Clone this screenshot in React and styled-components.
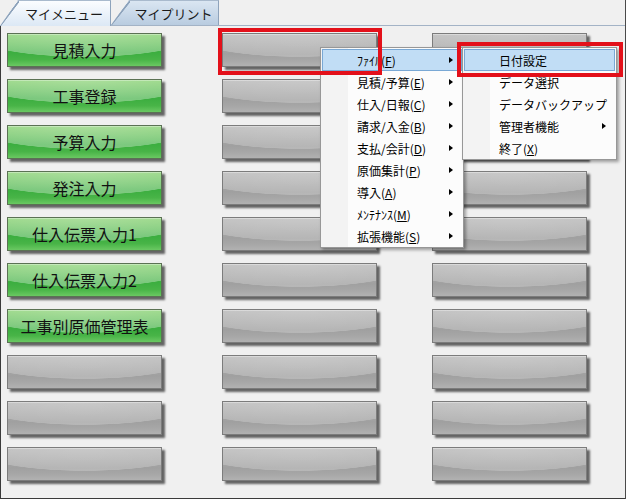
import React from 'react';
import styled, {createGlobalStyle, css} from 'styled-components';

const GlobalStyle = createGlobalStyle`
    body {
        margin: 0;
        background: #fff;
        font-family: "Noto Sans CJK JP", "Noto Sans", sans-serif;
    }
`;

const Frame = styled.div`
    position: relative;
    width: 626px;
    height: 499px;
    box-sizing: border-box;
    background: #f0f0f0;
    border-right: 1px solid #4a4a4a;
    display: flex;
    flex-direction: column;
    overflow: hidden;
`;

const TabStrip = styled.div`
    display: flex;
    height: 26px;
    box-sizing: border-box;
    border-bottom: 1px solid #a3b3c6;
`;

const Tab = styled.div`
    position: relative;
    width: ${p => p.$active ? 111 : 108}px;
    height: ${p => p.$active ? 26 : 25}px;
    box-sizing: border-box;
    padding-left: 18px;
    display: flex;
    align-items: center;
    justify-content: center;
    font-size: 13px;
    color: #1a1a1a;
    border-top: 1px solid #a9bacd;
    border-right: 1px solid #8ea3bb;
    clip-path: polygon(18px 0, 100% 0, 100% 100%, 0 100%);
    background:
        linear-gradient(to bottom right, transparent calc(50% - 1.2px), #8ea3bb calc(50% - 0.6px), #8ea3bb calc(50% + 0.6px), transparent calc(50% + 1.2px)) left top / 19px 100% no-repeat,
        ${p => p.$active
            ? 'linear-gradient(#fbfdff, #dce8f5)'
            : 'linear-gradient(#dae6f2, #b9cce0)'};
    z-index: ${p => p.$active ? 1 : 0};
`;

const Panel = styled.div`
    flex: 1;
    border-left: 1px solid #3a3a3a;
    border-bottom: 1px solid #3a3a3a;
    padding: 7px 0 0 6px;
    display: grid;
    grid-template-columns: 215px 210px 155px;
    grid-auto-rows: 34px;
    row-gap: 12px;
`;

const greenFace = css`
    border: 1px solid #5b7254;
    background:
        radial-gradient(ellipse 74% 72% at 50% 0%, rgba(255, 255, 255, 0.42) 0%, rgba(255, 255, 255, 0.32) 98%, rgba(255, 255, 255, 0) 100%),
        linear-gradient(#70c854 0%, #3cae40 58%, #48b447 80%, #6ac862 100%);
`;

const grayFace = css`
    border: 1px solid #7c7c7c;
    background:
        radial-gradient(ellipse 74% 72% at 50% 0%, rgba(255, 255, 255, 0.3) 0%, rgba(255, 255, 255, 0.22) 98%, rgba(255, 255, 255, 0) 100%),
        linear-gradient(#b2b2b2 0%, #a0a0a0 62%, #a6a6a6 80%, #b1b1b1 100%);
`;

const MenuButton = styled.div`
    position: relative;
    width: 155px;
    height: 34px;
    box-sizing: border-box;
    display: flex;
    align-items: center;
    justify-content: center;
    font-size: 16px;
    color: #111;
    box-shadow: inset 0 1px 0 rgba(255, 255, 255, 0.35), 3px 3px 2px rgba(40, 40, 40, 0.7);
    ${p => p.$green ? greenFace : grayFace}
`;

const Callout = styled.div`
    position: absolute;
    top: ${p => p.$top}px;
    left: ${p => p.$left}px;
    right: ${p => p.$right}px;
    bottom: ${p => p.$bottom}px;
    border: 4px solid #e3101a;
    pointer-events: none;
    z-index: 5;
`;

const Menu = styled.div`
    position: absolute;
    top: 47px;
    left: ${p => p.$left}px;
    width: ${p => p.$width}px;
    box-sizing: border-box;
    padding: 1px 0 0;
    border: 1px solid #979797;
    background: linear-gradient(to right, #f3f3f3 0 27px, #fcfcfc 27px);
    box-shadow: 2px 2px 3px rgba(0, 0, 0, 0.35);
    z-index: ${p => p.$z};
`;

const MenuItem = styled.div`
    position: relative;
    height: 22px;
    margin: 0 1px;
    box-sizing: border-box;
    padding-left: 34px;
    display: flex;
    align-items: center;
    font-size: 12px;
    color: #000;
    border: 1px solid ${p => p.$active ? '#79a8d5' : 'transparent'};
    background: ${p => p.$active ? '#c1ddf5' : 'transparent'};
`;

const Key = styled.span`
    text-decoration: underline;
    text-underline-offset: 1px;
`;

const Arrow = styled.span`
    position: absolute;
    right: 8px;
    top: 50%;
    transform: translateY(-50%);
    border-left: 4px solid #000;
    border-top: 3.5px solid transparent;
    border-bottom: 3.5px solid transparent;
`;

const firstColumn = [
    '見積入力', '工事登録', '予算入力', '発注入力', '仕入伝票入力1',
    '仕入伝票入力2', '工事別原価管理表', null, null, null
];

const mainMenu = [
    ['ﾌｧｲﾙ', 'F'], ['見積/予算', 'E'], ['仕入/日報', 'C'], ['請求/入金', 'B'],
    ['支払/会計', 'D'], ['原価集計', 'P'], ['導入', 'A'], ['ﾒﾝﾃﾅﾝｽ', 'M'], ['拡張機能', 'S']
];

const App = () => (
    <Frame>
        <GlobalStyle/>
        <TabStrip>
            <Tab $active>マイメニュー</Tab>
            <Tab>マイプリント</Tab>
        </TabStrip>
        <Panel>
            {firstColumn.map((label, index) => (
                <React.Fragment key={index}>
                    <MenuButton $green={!!label}>{label}</MenuButton>
                    <MenuButton>
                        {index === 0 && <Callout $top={-6} $left={-5} $right={-6} $bottom={-9}/>}
                    </MenuButton>
                    <MenuButton/>
                </React.Fragment>
            ))}
        </Panel>

        <Menu $left={320} $width={144} $z={2}>
            {mainMenu.map(([text, key], index) => (
                <MenuItem key={index} $active={index === 0}>
                    {text}(<Key>{key}</Key>)
                    <Arrow/>
                </MenuItem>
            ))}
        </Menu>

        <Menu $left={462} $width={155} $z={3}>
            <MenuItem $active>
                日付設定
                <Callout $top={-8} $left={-8} $right={-9} $bottom={-7}/>
            </MenuItem>
            <MenuItem>データ選択</MenuItem>
            <MenuItem>データバックアップ</MenuItem>
            <MenuItem>管理者機能<Arrow/></MenuItem>
            <MenuItem>終了(<Key>X</Key>)</MenuItem>
        </Menu>
    </Frame>
);

export default App
